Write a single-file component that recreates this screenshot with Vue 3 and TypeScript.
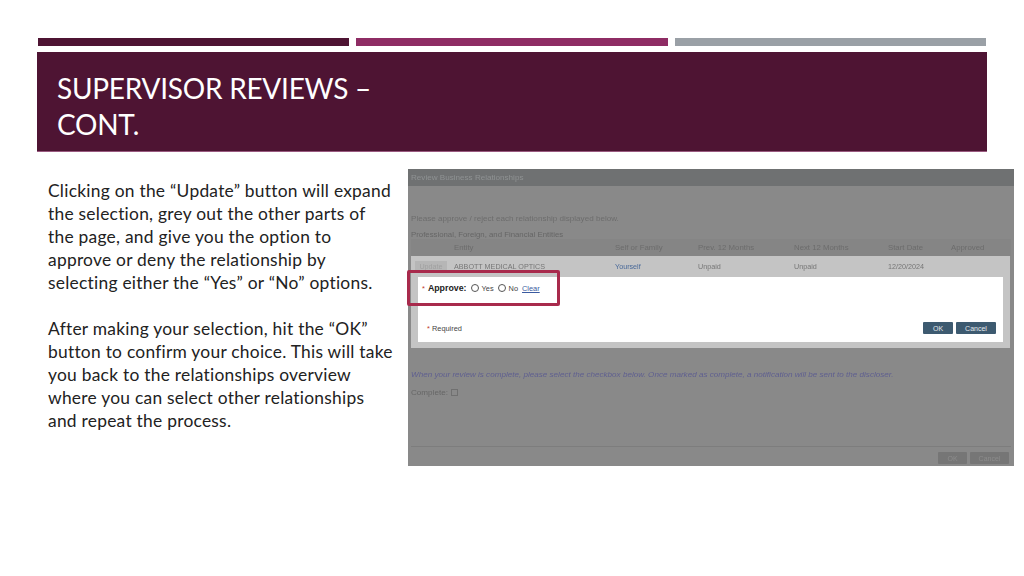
<template>
  <div class="slide">
    <div class="bars">
      <span class="bar bar-dark"></span>
      <span class="bar bar-pink"></span>
      <span class="bar bar-grey"></span>
    </div>
    <header class="title">
      <h1>SUPERVISOR REVIEWS –<br />CONT.</h1>
    </header>
    <main class="content">
      <div class="copy">
        <p>Clicking on the “Update” button will expand<br />the selection, grey out the other parts of<br />the page, and give you the option to<br />approve or deny the relationship by<br />selecting either the “Yes” or “No” options.</p>
        <p>After making your selection, hit the “OK”<br />button to confirm your choice. This will take<br />you back to the relationships overview<br />where you can select other relationships<br />and repeat the process.</p>
      </div>

      <!-- screenshot of the review dialog -->
      <div class="shot">
        <div class="shot-title">Review Business Relationships</div>
        <div class="shot-body">
          <div class="shot-intro">Please approve / reject each relationship displayed below.</div>
          <div class="shot-section">Professional, Foreign, and Financial Entities</div>
          <div class="row head">
            <span></span>
            <span v-for="c in columns" :key="c">{{ c }}</span>
          </div>
          <div class="expanded">
            <div class="row data">
              <span class="update">Update</span>
              <span>ABBOTT MEDICAL OPTICS</span>
              <span class="blue">Yourself</span>
              <span>Unpaid</span>
              <span>Unpaid</span>
              <span>12/20/2024</span>
              <span></span>
            </div>
            <div class="panel">
              <div class="approve">
                <span class="star">*</span>
                <b>Approve:</b>
                <i class="radio"></i><span>Yes</span>
                <i class="radio"></i><span>No</span>
                <a>Clear</a>
              </div>
              <div class="panel-foot">
                <span class="required"><span class="star">*</span> Required</span>
                <div class="panel-btns">
                  <button class="btn ok">OK</button>
                  <button class="btn cancel">Cancel</button>
                </div>
              </div>
            </div>
          </div>
          <div class="note">When your review is complete, please select the checkbox below. Once marked as complete, a notification will be sent to the discloser.</div>
          <div class="complete">Complete: <i class="check"></i></div>
          <div class="shot-foot">
            <button class="btn dim ok">OK</button>
            <button class="btn dim cancel">Cancel</button>
          </div>
        </div>
        <div class="highlight"></div>
      </div>
    </main>
  </div>
</template>

<script setup lang="ts">
const columns = ['Entity', 'Self or Family', 'Prev. 12 Months', 'Next 12 Months', 'Start Date', 'Approved']
</script>

<style>
html, body {
  margin: 0;
  background: #fff;
}
</style>

<style scoped>
.slide {
  width: 1024px;
  height: 576px;
  overflow: hidden;
  box-sizing: border-box;
  padding-top: 38px;
  font-family: Lato, "Liberation Sans", sans-serif;
  background: #fff;
}

.bars {
  display: flex;
  gap: 7px;
  width: 948px;
  margin-left: 38px;
}

.bar {
  flex: 1;
  height: 8px;
}

.bar-dark { background: #4e1433; }
.bar-pink { background: #8e2c64; }
.bar-grey { background: #9aa0a6; }

.title {
  box-sizing: border-box;
  width: 950px;
  height: 100px;
  margin: 6px 0 0 37px;
  padding: 18px 20px 0 20px;
  background: #4e1433;
  border-bottom: 1px solid #9a5a80;
}

.title h1 {
  margin: 0;
  font-size: 28px;
  line-height: 36px;
  font-weight: 400;
  letter-spacing: -0.25px;
  color: #fff;
}

.content {
  display: flex;
  margin-top: 17px;
}

.copy {
  box-sizing: border-box;
  width: 408px;
  padding: 10px 0 0 48px;
  font-size: 17.4px;
  line-height: 23px;
  letter-spacing: 0.25px;
  white-space: nowrap;
  color: #222;
}

.copy p {
  margin: 0 0 23px;
}

.shot {
  position: relative;
  width: 606px;
  height: 297px;
  font-family: "Liberation Sans", Arial, sans-serif;
  font-size: 8.1px;
  color: #666;
}

.shot-title {
  box-sizing: border-box;
  height: 17px;
  padding: 4px 3px;
  line-height: 9px;
  background: #6f7172;
  color: #8f9293;
  filter: blur(0.7px);
}

.shot-body {
  height: 280px;
  display: flex;
  flex-direction: column;
  background: #898989;
}

.shot-intro {
  padding: 28px 3px 0;
  line-height: 9px;
  color: #6d6d6d;
  filter: blur(0.6px);
}

.shot-section {
  padding: 7px 3px 0;
  line-height: 9px;
  font-size: 7.8px;
  color: #666;
  filter: blur(0.6px);
}

.row {
  display: grid;
  grid-template-columns: 43px 161px 83px 96px 94px 63px 1fr;
  align-items: center;
}

.head {
  height: 17px;
  margin: 0 3px;
  font-size: 7.8px;
  background: #858585;
  color: #6c6c6c;
  filter: blur(0.6px);
}

.expanded {
  box-sizing: border-box;
  width: 599px;
  height: 92px;
  margin-left: 3px;
  background: #c4c4c4;
}

.data {
  height: 21px;
  font-size: 7.2px;
  color: #767676;
  filter: blur(0.5px);
}

.update {
  width: 32px;
  height: 12px;
  margin-left: 4px;
  line-height: 12px;
  text-align: center;
  background: #b6b6b6;
  color: #a0a0a0;
}

.blue {
  color: #4a6a9a;
}

.panel {
  box-sizing: border-box;
  width: 585px;
  height: 65px;
  margin-left: 7px;
  padding: 5px 7px 8px 4px;
  display: flex;
  flex-direction: column;
  justify-content: space-between;
  background: #fff;
  font-size: 7.4px;
  color: #444;
}

.approve {
  display: flex;
  align-items: center;
  gap: 3px;
  height: 12px;
}

.approve b {
  font-size: 8.8px;
  color: #222;
}

.approve a {
  margin-left: 1px;
  color: #3a5aa0;
  text-decoration: underline;
}

.star {
  color: #c0392b;
}

.radio {
  width: 6px;
  height: 6px;
  margin-left: 1px;
  border: 1px solid #555;
  border-radius: 50%;
}

.panel-foot {
  display: flex;
  align-items: center;
  justify-content: space-between;
  padding-left: 5px;
}

.panel-btns,
.shot-foot {
  display: flex;
  gap: 3px;
}

.btn {
  height: 12px;
  padding: 0;
  border: 0;
  border-radius: 1px;
  background: #3d5a70;
  color: #e4e8ec;
  font-family: inherit;
  font-size: 7px;
}

.ok { width: 30px; }
.cancel { width: 40px; }

.note {
  padding: 22px 3px 0;
  line-height: 9px;
  font-style: italic;
  color: #5f5f90;
  filter: blur(0.6px);
}

.complete {
  display: flex;
  align-items: center;
  gap: 3px;
  padding: 9px 3px 0;
  line-height: 9px;
  color: #666;
  filter: blur(0.6px);
}

.check {
  width: 5px;
  height: 5px;
  border: 1px solid #707070;
}

.shot-foot {
  justify-content: flex-end;
  box-sizing: border-box;
  width: 600px;
  height: 20px;
  margin-top: auto;
  margin-left: 3px;
  padding: 5px 2px 0 0;
  border-top: 1px solid #7d7d7d;
}

.btn.dim {
  background: #767676;
  color: #8c8c8c;
  filter: blur(0.5px);
}

.btn.dim.ok { width: 29px; }
.btn.dim.cancel { width: 39px; }

/* red box around the approve row */
.highlight {
  position: absolute;
  left: -1px;
  top: 101px;
  width: 147px;
  height: 30px;
  border: 3px solid #a82a4c;
  border-radius: 2px;
}
</style>
